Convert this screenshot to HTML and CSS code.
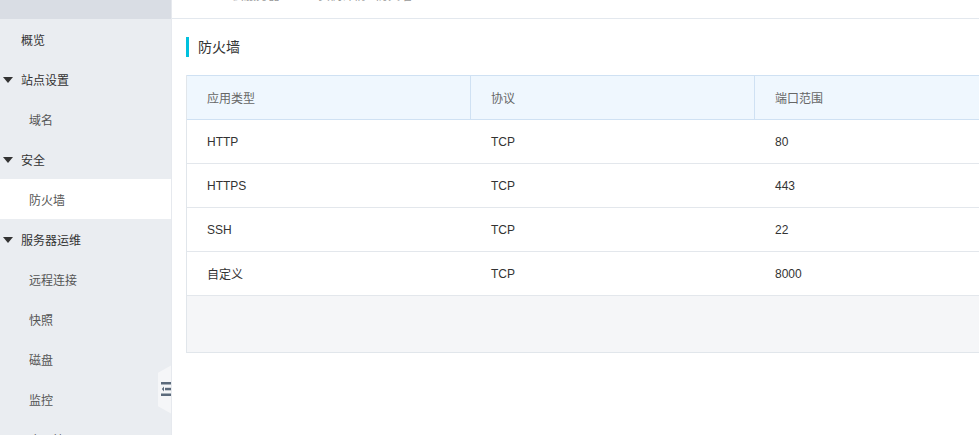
FILE: index.html
```html
<!DOCTYPE html>
<html lang="zh">
<head>
<meta charset="utf-8">
<title>防火墙</title>
<link rel="stylesheet" href="styles.css">
</head>
<body>
<div class="layout">
  <aside class="sidebar">
    <div class="side-top"></div>
    <ul class="menu">
      <li class="item lvl1">概览</li>
      <li class="item lvl1 group"><span class="caret"></span>站点设置</li>
      <li class="item lvl2">域名</li>
      <li class="item lvl1 group"><span class="caret"></span>安全</li>
      <li class="item lvl2 active">防火墙</li>
      <li class="item lvl1 group"><span class="caret"></span>服务器运维</li>
      <li class="item lvl2">远程连接</li>
      <li class="item lvl2">快照</li>
      <li class="item lvl2">磁盘</li>
      <li class="item lvl2">监控</li>
      <li class="item lvl2">应用管理</li>
    </ul>
    <div class="collapse">
      <svg width="11" height="14" viewBox="0 0 11 14">
        <rect x="0" y="0" width="11" height="2.5" fill="#5b6a7b"/>
        <rect x="4" y="5.8" width="7" height="2.5" fill="#5b6a7b"/>
        <path d="M3 4.6 L0.8 7 L3 9.4 Z" fill="#5b6a7b"/>
        <rect x="0" y="11.5" width="11" height="2.5" fill="#5b6a7b"/>
      </svg>
    </div>
  </aside>
  <main class="main">
    <header class="topbar"><span class="crumb">云服务器 ECS / 实例详情 / 防火墙</span></header>
    <section class="content">
      <h2 class="title">防火墙</h2>
      <div class="table">
        <div class="row head">
          <div class="cell">应用类型</div>
          <div class="cell">协议</div>
          <div class="cell">端口范围</div>
        </div>
        <div class="row">
          <div class="cell">HTTP</div>
          <div class="cell">TCP</div>
          <div class="cell">80</div>
        </div>
        <div class="row">
          <div class="cell">HTTPS</div>
          <div class="cell">TCP</div>
          <div class="cell">443</div>
        </div>
        <div class="row">
          <div class="cell">SSH</div>
          <div class="cell">TCP</div>
          <div class="cell">22</div>
        </div>
        <div class="row">
          <div class="cell">自定义</div>
          <div class="cell">TCP</div>
          <div class="cell">8000</div>
        </div>
        <div class="foot"></div>
      </div>
    </section>
  </main>
</div>
</body>
</html>
```

FILE: styles.css
```css
* { box-sizing: border-box; }
html, body {
  margin: 0;
  padding: 0;
  height: 100%;
  overflow: hidden;
  background: #fff;
  font-family: "Liberation Sans", "Noto Sans CJK SC", sans-serif;
  font-size: 12px;
  color: #333;
}
.layout {
  display: flex;
  height: 435px;
}
.sidebar {
  position: relative;
  width: 171px;
  flex: none;
  background: #eaedf1;
  overflow: hidden;
}
.side-top {
  height: 19px;
  background: #d9dde4;
}
.menu {
  list-style: none;
  margin: 0;
  padding: 0;
}
.item {
  height: 40px;
  padding-top: 1px;
  color: #333;
  white-space: nowrap;
  display: flex;
  align-items: center;
}
.lvl1 { padding-left: 21px; position: relative; }
.lvl2 { padding-left: 29px; color: #555; }
.active { background: #fff; }
.caret {
  position: absolute;
  left: 3px;
  top: 18px;
  width: 0;
  height: 0;
  border-left: 5px solid transparent;
  border-right: 5px solid transparent;
  border-top: 6px solid #333;
}
.collapse {
  position: absolute;
  left: 158px;
  top: 365px;
  width: 14px;
  height: 49px;
  background: #f5f6f8;
  clip-path: polygon(0 16%, 100% 0, 100% 100%, 0 84%);
  display: flex;
  align-items: center;
  justify-content: flex-end;
}
.collapse svg { display: block; margin-top: -2px; }
.main {
  flex: 1;
  min-width: 0;
  overflow: hidden;
  border-left: 1px solid #e6e9ee;
}
.topbar {
  height: 19px;
  border-bottom: 1px solid #e3e8ee;
  position: relative;
  overflow: hidden;
}
.crumb {
  position: absolute;
  left: 60px;
  top: -11px;
  font-size: 12px;
  line-height: 14px;
  color: #999;
}
.content {
  padding: 18px 0 0 14px;
}
.title {
  margin: 0;
  height: 20px;
  line-height: 20px;
  font-size: 14px;
  font-weight: normal;
  color: #333;
  border-left: 3px solid #00c1de;
  padding-left: 9px;
}
.table {
  margin-top: 18px;
  width: 852px;
  border: 1px solid #e1e6eb;
  border-top: none;
}
.row {
  display: flex;
  height: 44px;
  border-bottom: 1px solid #e3e7ec;
}
.cell {
  width: 284px;
  flex: none;
  padding-left: 20px;
  display: flex;
  align-items: center;
  color: #333;
}
.row.head {
  background: #eff7fe;
  border-top: 1px solid #cfe1f3;
  border-bottom: 1px solid #cfe1f3;
  height: 45px;
}
.row.head .cell {
  color: #666;
  border-right: 1px solid #cfe1f3;
}
.foot {
  height: 56px;
  background: #f5f6f8;
}
```
